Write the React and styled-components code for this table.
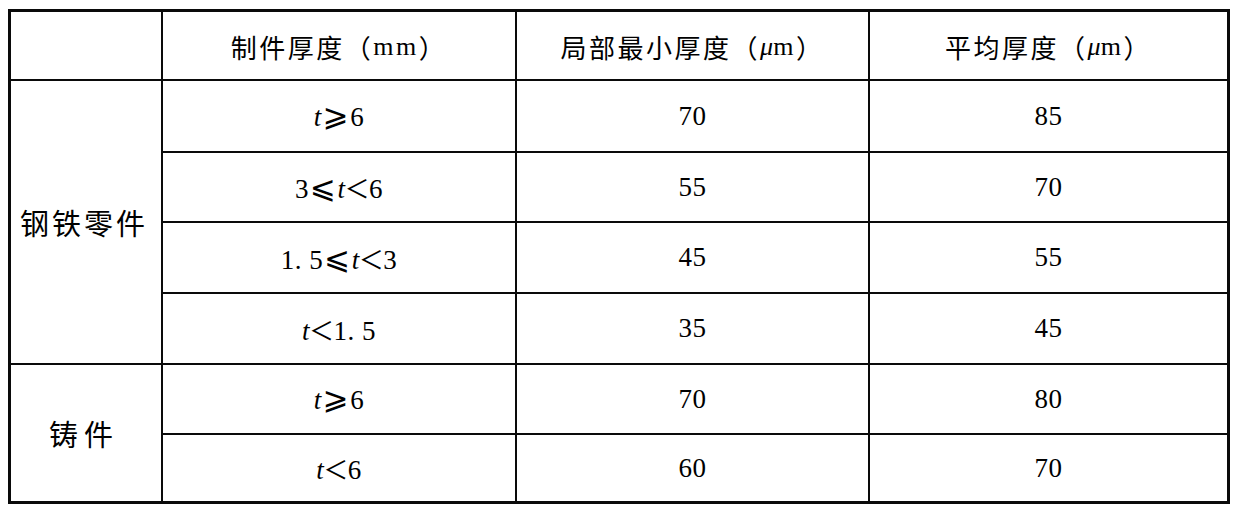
import React from "react";
import styled, { createGlobalStyle } from "styled-components";

const Global = createGlobalStyle`
  html, body { margin: 0; padding: 0; background: #fff; }
  body { font-family: "Liberation Serif", "Noto Sans CJK SC", serif; color: #000; }
`;

const Page = styled.div`
  padding: 9px 0 0 8px;
`;

const Grid = styled.div`
  display: grid;
  width: 1216px;
  grid-template-columns: 150px 352px 351px 357px;
  grid-template-rows: 67px 70px 68px 69px 69px 68px 66px;
  gap: 2px;
  background: #0a0a0a;
  border: 3px solid #0a0a0a;
`;

const Cell = styled.div`
  background: #fff;
  display: flex;
  align-items: center;
  justify-content: center;
  font-size: 26px;
  white-space: nowrap;
  grid-row: ${(p) => (p.$span ? `span ${p.$span}` : "auto")};
`;

const HeadCell = styled(Cell)`
  font-size: 26px;
  letter-spacing: 2.5px;
  padding-top: 2px;
`;

const CategoryCell = styled(Cell)`
  font-family: "Noto Sans CJK SC", sans-serif;
  font-size: 29px;
  letter-spacing: ${(p) => p.$spacing || "3px"};
  padding-right: 4px;
`;

const Num = styled.span`
  font-size: 27px;
  letter-spacing: 0.5px;
`;

const Cjk = styled.span`
  font-family: "Noto Sans CJK SC", sans-serif;
`;

const Var = styled.i`
  font-family: "Liberation Serif", serif;
  font-style: italic;
`;

const Rel = styled.span`
  font-family: "DejaVu Sans", "Noto Sans CJK SC", sans-serif;
  font-size: 31px;
  line-height: 1;
  margin: 0 1px;
`;

const Lt = styled.span`
  font-family: "Noto Sans CJK SC", sans-serif;
  font-size: 25px;
  margin: 0 -1px;
`;

const Mu = styled.i`
  font-family: "Liberation Serif", serif;
  font-style: italic;
  letter-spacing: 0;
`;

const Ge = () => <Rel>⩾</Rel>;
const Le = () => <Rel>⩽</Rel>;
const L = () => <Lt>＜</Lt>;
const T = () => <Var>t</Var>;

const rows = [
  { cat: "钢铁零件", span: 4, spacing: "3px", range: <><T /><Ge />6</>, min: "70", avg: "85" },
  { range: <>3<Le /><T /><L />6</>, min: "55", avg: "70" },
  { range: <>1. 5<Le /><T /><L />3</>, min: "45", avg: "55" },
  { range: <><T /><L />1. 5</>, min: "35", avg: "45" },
  { cat: "铸件", span: 2, spacing: "6px", range: <><T /><Ge />6</>, min: "70", avg: "80" },
  { range: <><T /><L />6</>, min: "60", avg: "70" },
];

export default function App() {
  return (
    <Page>
      <Global />
      <Grid>
        <Cell />
        <HeadCell>
          <Cjk>制件厚度（</Cjk>mm<Cjk>）</Cjk>
        </HeadCell>
        <HeadCell>
          <Cjk>局部最小厚度（</Cjk><Mu>μ</Mu>m<Cjk>）</Cjk>
        </HeadCell>
        <HeadCell>
          <Cjk>平均厚度（</Cjk><Mu>μ</Mu>m<Cjk>）</Cjk>
        </HeadCell>
        {rows.map((r, i) => (
          <React.Fragment key={i}>
            {r.cat && (
              <CategoryCell $span={r.span} $spacing={r.spacing}>
                {r.cat}
              </CategoryCell>
            )}
            <Cell><Num>{r.range}</Num></Cell>
            <Cell><Num>{r.min}</Num></Cell>
            <Cell><Num>{r.avg}</Num></Cell>
          </React.Fragment>
        ))}
      </Grid>
    </Page>
  );
}
